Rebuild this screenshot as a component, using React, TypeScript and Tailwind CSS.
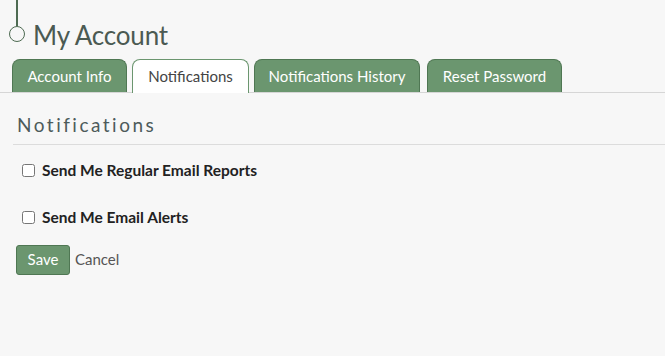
import React, { useState } from 'react';

const tabs = [
  { label: 'Account Info', w: 'w-[115px]' },
  { label: 'Notifications', w: 'w-[117px]' },
  { label: 'Notifications History', w: 'w-[166px]' },
  { label: 'Reset Password', w: 'w-[135px] ml-[2px]' },
];

const App: React.FC = () => {
  const [active, setActive] = useState(1);
  const [reports, setReports] = useState(false);
  const [alerts, setAlerts] = useState(false);

  return (
    <div className="min-h-screen bg-[#f7f7f7] font-['Lato',sans-serif] text-[#333]">
      {/* Header */}
      <div className="flex items-start pl-[9px]">
        <div className="flex flex-col items-center w-4">
          <div className="w-[2px] h-[26px] bg-[#4e6b52]" />
          <div className="w-4 h-4 rounded-full border-[1.5px] border-[#4e6b52]" />
        </div>
        <h1 className="ml-[8px] mt-[20px] text-[26px] leading-[30px] tracking-[-0.2px] text-[#4b5a52]">My Account</h1>
      </div>

      {/* Tabs */}
      <div className="mt-[9px] flex items-end gap-[5px] px-[12px] border-b border-[#d6d6d6]">
        {tabs.map((t, i) => (
          <button
            key={t.label}
            onClick={() => setActive(i)}
            className={
              i === active
                ? `${t.w} h-[34px] -mb-px rounded-t-[8px] border border-b-0 border-[#6b966f] bg-white text-[15px] text-[#444]`
                : `${t.w} h-[33px] rounded-t-[8px] border border-b-0 border-[#4f7753] bg-[#6b966f] text-[15px] text-white`
            }
          >
            {t.label}
          </button>
        ))}
      </div>

      {/* Section */}
      <div className="ml-[13px] mt-[21px]">
        <h2 className="pl-[4px] text-[19px] leading-[22px] tracking-[2.5px] text-[#4d5b5b] pb-[8px] border-b border-[#dcdcdc]">
          Notifications
        </h2>

        <label className="mt-[14px] ml-[9px] flex items-center gap-[7px] cursor-pointer">
          <input
            type="checkbox"
            checked={reports}
            onChange={(e) => setReports(e.target.checked)}
            className="w-[13px] h-[13px] m-0"
          />
          <span className="text-[15.5px] font-bold text-[#222]">Send Me Regular Email Reports</span>
        </label>

        <label className="mt-[24px] ml-[9px] flex items-center gap-[7px] cursor-pointer">
          <input
            type="checkbox"
            checked={alerts}
            onChange={(e) => setAlerts(e.target.checked)}
            className="w-[13px] h-[13px] m-0"
          />
          <span className="text-[15.5px] font-bold text-[#222]">Send Me Email Alerts</span>
        </label>

        <div className="mt-[15px] ml-[3px] flex items-center gap-[5px]">
          <button className="w-[54px] h-[30px] rounded-[3px] border border-[#4f7753] bg-[#6b966f] text-[15px] text-white">
            Save
          </button>
          <button className="text-[15px] text-[#555]">Cancel</button>
        </div>
      </div>
    </div>
  );
};

export default App;
